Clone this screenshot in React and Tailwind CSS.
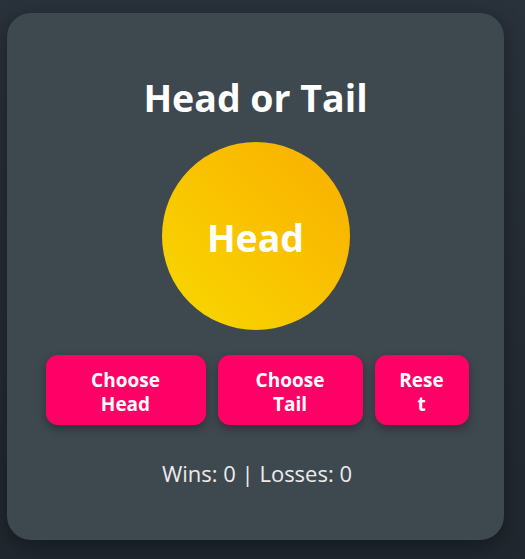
export default function App() {
  return (
    <div
      className="min-h-screen bg-gradient-to-b from-[#29313a] to-[#20272e] pl-[7px] pt-[13px]"
      style={{ fontFamily: '"Open Sans", "Noto Sans", sans-serif' }}
    >
      <div className="flex h-[527px] w-[497px] flex-col items-center rounded-[24px] bg-[#3e484f] pt-[63px] shadow-[0_6px_20px_rgba(0,0,0,0.35)]">
        <h1 className="text-[37.5px] font-bold leading-[44px] text-white">Head or Tail</h1>
        <div className="mt-[22px] flex h-[188px] w-[188px] items-center justify-center rounded-full bg-gradient-to-tr from-[#f8d800] to-[#f9ae00]">
          <span className="pt-[4px] text-[37.5px] font-bold text-white">Head</span>
        </div>
        <div className="mt-[25px] flex gap-[12px] pl-[3px]">
          <button className="h-[70px] w-[160px] rounded-[12px] bg-[#ff0066] px-3 pt-[4px] text-[19px] font-bold leading-[24px] text-white shadow-[0_4px_10px_rgba(0,0,0,0.3)]">
            Choose
            <br />
            Head
          </button>
          <button className="h-[70px] w-[145px] rounded-[12px] bg-[#ff0066] px-3 pt-[4px] text-[19px] font-bold leading-[24px] text-white shadow-[0_4px_10px_rgba(0,0,0,0.3)]">
            Choose
            <br />
            Tail
          </button>
          <button className="h-[70px] w-[94px] rounded-[12px] bg-[#ff0066] px-3 pt-[4px] text-[19px] font-bold leading-[24px] text-white shadow-[0_4px_10px_rgba(0,0,0,0.3)]">
            Rese
            <br />t
          </button>
        </div>
        <p className="mt-[33px] pl-[3px] text-[22px] leading-[30px] text-[#ececec]">Wins: 0 | Losses: 0</p>
      </div>
    </div>
  );
}
